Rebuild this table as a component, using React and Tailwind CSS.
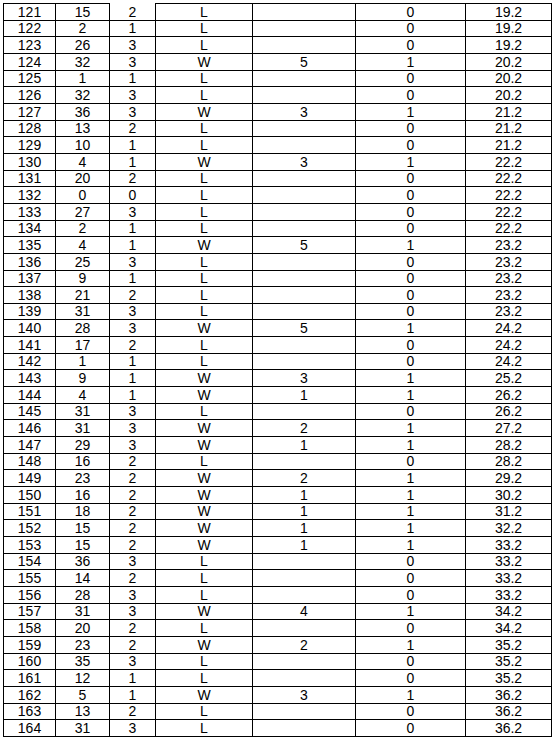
const rows = [
  [121, 15, 2, 'L', '', 0, '19.2'],
  [122, 2, 1, 'L', '', 0, '19.2'],
  [123, 26, 3, 'L', '', 0, '19.2'],
  [124, 32, 3, 'W', 5, 1, '20.2'],
  [125, 1, 1, 'L', '', 0, '20.2'],
  [126, 32, 3, 'L', '', 0, '20.2'],
  [127, 36, 3, 'W', 3, 1, '21.2'],
  [128, 13, 2, 'L', '', 0, '21.2'],
  [129, 10, 1, 'L', '', 0, '21.2'],
  [130, 4, 1, 'W', 3, 1, '22.2'],
  [131, 20, 2, 'L', '', 0, '22.2'],
  [132, 0, 0, 'L', '', 0, '22.2'],
  [133, 27, 3, 'L', '', 0, '22.2'],
  [134, 2, 1, 'L', '', 0, '22.2'],
  [135, 4, 1, 'W', 5, 1, '23.2'],
  [136, 25, 3, 'L', '', 0, '23.2'],
  [137, 9, 1, 'L', '', 0, '23.2'],
  [138, 21, 2, 'L', '', 0, '23.2'],
  [139, 31, 3, 'L', '', 0, '23.2'],
  [140, 28, 3, 'W', 5, 1, '24.2'],
  [141, 17, 2, 'L', '', 0, '24.2'],
  [142, 1, 1, 'L', '', 0, '24.2'],
  [143, 9, 1, 'W', 3, 1, '25.2'],
  [144, 4, 1, 'W', 1, 1, '26.2'],
  [145, 31, 3, 'L', '', 0, '26.2'],
  [146, 31, 3, 'W', 2, 1, '27.2'],
  [147, 29, 3, 'W', 1, 1, '28.2'],
  [148, 16, 2, 'L', '', 0, '28.2'],
  [149, 23, 2, 'W', 2, 1, '29.2'],
  [150, 16, 2, 'W', 1, 1, '30.2'],
  [151, 18, 2, 'W', 1, 1, '31.2'],
  [152, 15, 2, 'W', 1, 1, '32.2'],
  [153, 15, 2, 'W', 1, 1, '33.2'],
  [154, 36, 3, 'L', '', 0, '33.2'],
  [155, 14, 2, 'L', '', 0, '33.2'],
  [156, 28, 3, 'L', '', 0, '33.2'],
  [157, 31, 3, 'W', 4, 1, '34.2'],
  [158, 20, 2, 'L', '', 0, '34.2'],
  [159, 23, 2, 'W', 2, 1, '35.2'],
  [160, 35, 3, 'L', '', 0, '35.2'],
  [161, 12, 1, 'L', '', 0, '35.2'],
  [162, 5, 1, 'W', 3, 1, '36.2'],
  [163, 13, 2, 'L', '', 0, '36.2'],
  [164, 31, 3, 'L', '', 0, '36.2'],
];

const widths = ['w-[53px] border-l', 'w-[54px]', 'w-[46px]', 'w-[97px]', 'w-[103px]', 'w-[110px]', 'w-[86px]'];

export default function App() {
  return (
    <div className="w-[556px] h-[741px] bg-white pt-[3px] pl-[3px] text-black text-[14px] leading-[12px]" style={{ fontFamily: '"Liberation Sans", Arial, sans-serif' }}>
      {rows.map((r, i) => (
        <div key={r[0]} className={i === 0 ? 'flex h-[17.66px]' : 'flex h-[16.66px]'}>
          {r.map((v, j) => (
            <div
              key={j}
              className={
                widths[j] +
                ' shrink-0 border-r border-b border-black flex items-end justify-center pb-[2px] ' +
                (i === 0 && j !== 2 ? 'border-t' : '') +
                (i === 0 && j === 2 ? 'pt-[1px]' : '')
              }
            >
              {v}
            </div>
          ))}
        </div>
      ))}
    </div>
  );
}
